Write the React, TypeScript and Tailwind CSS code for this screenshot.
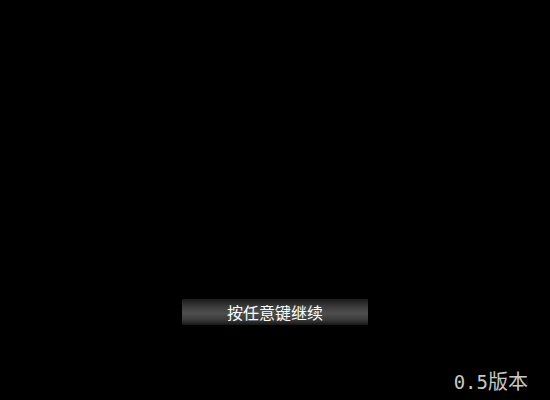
export default function App() {
  return (
    <div className="w-[550px] h-[400px] bg-black flex flex-col overflow-hidden">
      <div className="pt-[299px] flex justify-center">
        <div className="w-[186px] h-[26px] flex items-center justify-center bg-[linear-gradient(to_bottom,#1a1a1a_0%,#3c3c3c_30%,#4e4e4e_55%,#3a3a3a_80%,#161616_100%)]">
          <span className="text-white text-[16px] leading-none font-['Noto_Sans_CJK_SC',sans-serif]">
            按任意键继续
          </span>
        </div>
      </div>
      <div className="mt-auto self-end pr-[22px] pb-[8px] flex items-baseline text-[#c8c8c8] leading-none">
        <span className="text-[19px] font-['DejaVu_Sans_Mono',monospace]">0.5</span>
        <span className="text-[20px] font-['Noto_Sans_CJK_SC',sans-serif]">版本</span>
      </div>
    </div>
  )
}
